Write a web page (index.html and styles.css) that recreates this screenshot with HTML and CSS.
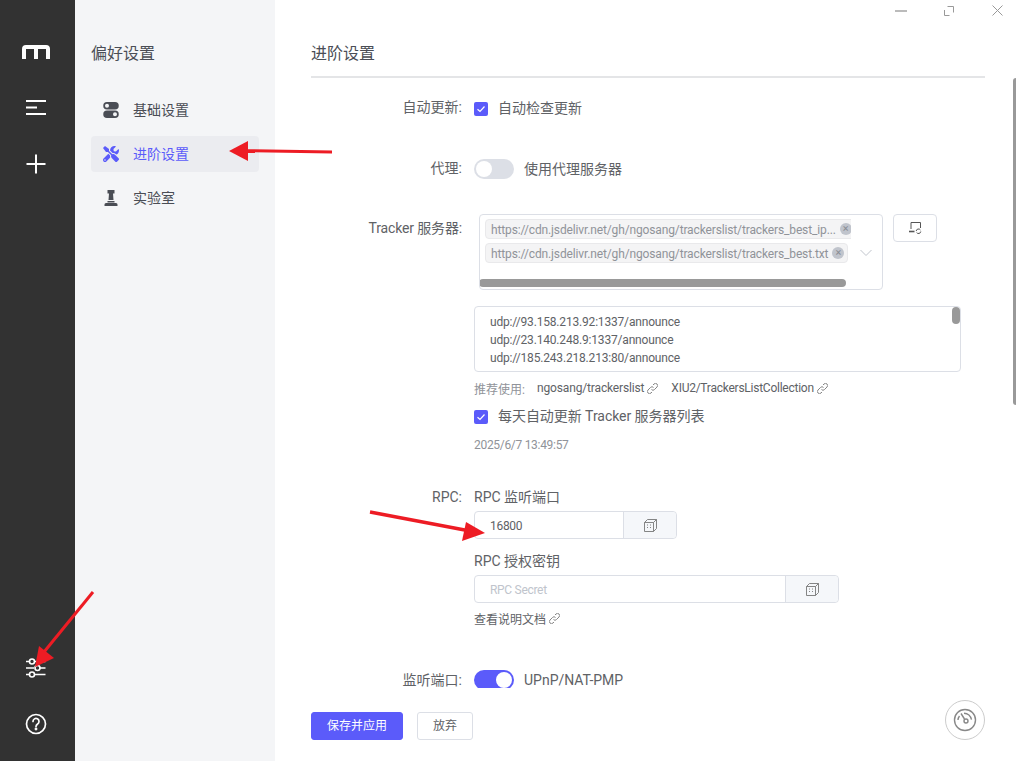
FILE: index.html
```html
<!DOCTYPE html>
<html lang="zh-CN">
<head>
<meta charset="utf-8">
<title>偏好设置</title>
<link rel="stylesheet" href="styles.css">
</head>
<body>
<div class="app">
  <aside class="rail">
    <div class="rail-top">
      <svg class="logo" width="28" height="14" viewBox="0 0 28 14"><path fill="#fff" d="M0 14V4a4 4 0 0 1 4-4h20a4 4 0 0 1 4 4v10h-4V4h-8v10h-4V4H4v10z"/></svg>
      <svg class="rail-icon" width="22" height="16" viewBox="0 0 22 16"><path stroke="#fff" stroke-width="2" fill="none" d="M1 2h20M1 8.500h11M1 15h20"/></svg>
      <svg class="rail-icon plus" width="20" height="20" viewBox="0 0 20 20"><path stroke="#fff" stroke-width="2" fill="none" d="M0.500 10h19M10 0.500v19"/></svg>
    </div>
    <div class="rail-bottom">
      <svg width="22" height="20" viewBox="0 0 22 20" fill="none" stroke="#fff" stroke-width="1.600"><path d="M1 3.500h3.500M10 3.500h10.500M1 10h8M15 10h5.500M1 16.500h3.500M10 16.500h10.500"/><circle cx="7" cy="3.500" r="2.500"/><circle cx="12.500" cy="10" r="2.500"/><circle cx="7" cy="16.500" r="2.500"/></svg>
      <svg width="22" height="22" viewBox="0 0 22 22" fill="none" stroke="#fff" stroke-width="1.700"><circle cx="11" cy="11" r="9.500"/><path d="M8 8.500a3 3 0 1 1 4.600 2.500c-1 .7-1.600 1.200-1.600 2.500" stroke-linecap="round"/><circle cx="11" cy="16" r=".6" fill="#fff"/></svg>
    </div>
  </aside>

  <nav class="subnav">
    <h1 class="subnav-title">偏好设置</h1>
    <ul class="subnav-list">
      <li class="subnav-item">
        <svg width="16" height="16" viewBox="0 0 16 16"><path fill="#4a4d55" fill-rule="evenodd" d="M4 0h8a3.750 3.750 0 0 1 0 7.500H4A3.750 3.750 0 0 1 4 0zm0 1.800a2 2 0 1 0 0 4 2 2 0 0 0 0-4zM4 8.500h8a3.750 3.750 0 0 1 0 7.500H4a3.750 3.750 0 0 1 0-7.500zm8 1.800a2 2 0 1 0 0 4 2 2 0 0 0 0-4z"/></svg>
        <span>基础设置</span>
      </li>
      <li class="subnav-item active">
        <svg width="16" height="16" viewBox="0 0 512 512"><path fill="#5b5bfa" d="M501.100 395.700 384 278.600c-23.100-23.100-57.600-27.600-85.400-13.900L192 158.100V96L64 0 0 64l96 128h62.100l106.600 106.600c-13.600 27.800-9.200 62.300 13.900 85.400l117.100 117.100c14.600 14.600 38.200 14.600 52.700 0l52.700-52.700c14.500-14.600 14.500-38.200 0-52.700zM331.700 225c28.300 0 54.900 11 74.900 31l19.400 19.400c15.800-6.900 30.800-16.500 43.800-29.500 37.100-37.100 49.700-89.300 37.900-136.700-2.200-9-13.500-12.100-20.100-5.500l-74.400 74.400-67.900-11.300L334 98.900l74.400-74.400c6.600-6.600 3.400-17.900-5.700-20.200-47.400-11.700-99.600.9-136.600 37.900-28.500 28.500-41.900 66.100-41.200 103.600l82.100 82.100c8.100-1.900 16.500-2.900 24.700-2.900zm-103.900 82-56.700-56.700L18.700 402.800c-25 25-25 65.500 0 90.500s65.500 25 90.500 0l123.600-123.600c-7.600-19.900-9.900-41.600-5-62.700zM64 472c-13.200 0-24-10.800-24-24 0-13.300 10.700-24 24-24s24 10.700 24 24c0 13.200-10.700 24-24 24z"/></svg>
        <span>进阶设置</span>
      </li>
      <li class="subnav-item">
        <svg width="16" height="16" viewBox="0 0 16 16"><path fill="#4a4d55" d="M4.500 0h7v3.500H10L10.500 10h-5L6 3.500H4.500zM4.500 11h7v1.500h-7zM3 13h10a1.500 1.500 0 0 1 1.500 1.500V16h-13v-1.500A1.500 1.500 0 0 1 3 13z"/></svg>
        <span>实验室</span>
      </li>
    </ul>
  </nav>

  <main class="panel">
    <h2 class="panel-title">进阶设置</h2>
    <div class="form">
      <div class="row row-update">
        <div class="label label-cjk">自动更新:</div>
        <div class="field">
          <div class="check"><span class="box"><svg width="14" height="14" viewBox="0 0 14 14"><path d="M3.500 7.200 6 9.500l4.500-5" fill="none" stroke="#fff" stroke-width="1.200"/></svg></span><span class="check-text">自动检查更新</span></div>
        </div>
      </div>

      <div class="row row-proxy">
        <div class="label label-cjk">代理:</div>
        <div class="field">
          <div class="switch-line"><span class="switch"><span class="knob"></span></span><span class="check-text">使用代理服务器</span></div>
        </div>
      </div>

      <div class="row row-tracker">
        <div class="label label-tracker">Tracker 服务器:</div>
        <div class="field">
          <div class="tracker-top">
            <div class="select">
              <div class="tags">
                <div class="tag tag-long"><span class="tag-text">https://cdn.jsdelivr.net/gh/ngosang/trackerslist/trackers_best_ip...</span><span class="tag-close">×</span></div>
                <div class="tag"><span class="tag-text">https://cdn.jsdelivr.net/gh/ngosang/trackerslist/trackers_best.txt</span><span class="tag-close">×</span></div>
                <div class="hscroll"></div>
              </div>
              <svg class="chevron" width="12" height="8" viewBox="0 0 12 8"><path d="M.5 1 6 6.500 11.500 1" fill="none" stroke="#c0c4cc"/></svg>
            </div>
            <div class="sync-btn">
              <svg width="13" height="12" viewBox="0 0 13 12" fill="none" stroke="#555"><path d="M2 7V.5h9.500V6"/><path stroke-width="1.600" d="M0 9.500h5.500"/><path d="M7.200 9a2.300 2.300 0 0 1 4.200-1M11.800 9.500a2.300 2.300 0 0 1-4.200 1"/></svg>
            </div>
          </div>
          <div class="textarea">
            <div>udp://93.158.213.92:1337/announce</div>
            <div>udp://23.140.248.9:1337/announce</div>
            <div>udp://185.243.218.213:80/announce</div>
            <span class="vthumb"></span>
          </div>
          <div class="hint">
            <span class="hint-title">推荐使用:</span>
            <span class="hint-link">ngosang/trackerslist <svg class="link-icon" width="11" height="11" viewBox="0 0 11 11"><path d="M4.500 6.500a2 2 0 0 0 3 0L10 4a2 2 0 0 0-3-3L6 2M6.500 4.500a2 2 0 0 0-3 0L1 7a2 2 0 0 0 3 3l1-1" fill="none" stroke="#777" stroke-width=".9"/></svg></span>
            <span class="hint-link hint-link-long">XIU2/TrackersListCollection <svg class="link-icon" width="11" height="11" viewBox="0 0 11 11"><path d="M4.500 6.500a2 2 0 0 0 3 0L10 4a2 2 0 0 0-3-3L6 2M6.500 4.500a2 2 0 0 0-3 0L1 7a2 2 0 0 0 3 3l1-1" fill="none" stroke="#777" stroke-width=".9"/></svg></span>
          </div>
          <div class="check check-daily"><span class="box"><svg width="14" height="14" viewBox="0 0 14 14"><path d="M3.500 7.200 6 9.500l4.500-5" fill="none" stroke="#fff" stroke-width="1.200"/></svg></span><span class="check-text">每天自动更新 Tracker 服务器列表</span></div>
          <div class="date">2025/6/7 13:49:57</div>
        </div>
      </div>

      <div class="row row-rpc">
        <div class="label">RPC:</div>
        <div class="field">
          <div class="sub-label">RPC 监听端口</div>
          <div class="input-group group-port">
            <div class="input">16800</div>
            <div class="addon"><svg width="13" height="13" viewBox="0 0 13 13" fill="none" stroke="#777" stroke-width=".9"><path d="M.5 3.500h9v9h-9zM.5 3.500l3-3h9v9l-3 3M9.500 3.500l3-3"/><path d="M3 6h1M6 6h1M3 8.500h1M6 8.500h1"/></svg></div>
          </div>
          <div class="sub-label sub-second">RPC 授权密钥</div>
          <div class="input-group group-secret">
            <div class="input placeholder">RPC Secret</div>
            <div class="addon"><svg width="13" height="13" viewBox="0 0 13 13" fill="none" stroke="#777" stroke-width=".9"><path d="M.5 3.500h9v9h-9zM.5 3.500l3-3h9v9l-3 3M9.500 3.500l3-3"/><path d="M3 6h1M6 6h1M3 8.500h1M6 8.500h1"/></svg></div>
          </div>
          <div class="doc-link">查看说明文档 <svg class="link-icon" width="11" height="11" viewBox="0 0 11 11"><path d="M4.500 6.500a2 2 0 0 0 3 0L10 4a2 2 0 0 0-3-3L6 2M6.500 4.500a2 2 0 0 0-3 0L1 7a2 2 0 0 0 3 3l1-1" fill="none" stroke="#777" stroke-width=".9"/></svg></div>
        </div>
      </div>

      <div class="row row-port">
        <div class="label">监听端口:</div>
        <div class="field">
          <div class="switch-line"><span class="switch on"><span class="knob"></span></span><span>UPnP/NAT-PMP</span></div>
        </div>
      </div>
    </div>

    <div class="actions">
      <div class="btn primary">保存并应用</div>
      <div class="btn">放弃</div>
    </div>
  </main>
</div>

<div class="page-scroll"></div>

<div class="win-controls">
  <svg class="win-min" width="12" height="2" viewBox="0 0 12 2"><path d="M0 1h12" stroke="#bbb" stroke-width="2"/></svg>
  <svg width="10" height="10" viewBox="0 0 10 10" fill="none" stroke="#999"><path d="M3.500.5h6v6M.5 4v5.500h5"/></svg>
  <svg width="11" height="11" viewBox="0 0 11 11" fill="none" stroke="#999"><path d="M.5.500l10 10M10.500.5l-10 10"/></svg>
</div>

<div class="speedo">
  <svg width="24" height="24" viewBox="0 0 24 24" fill="none" stroke="#888" stroke-width="1.400"><circle cx="12" cy="12" r="10.500"/><circle cx="13" cy="13" r="2"/><path d="M11.500 11 8 5.500M5 12a7 7 0 0 1 1.500-4M11 5.200a8 8 0 0 1 7.500 6.500"/></svg>
</div>

<svg class="arrows" width="1016" height="761" viewBox="0 0 1016 761">
  <g fill="#ed1c24" stroke="#ed1c24">
    <path stroke-width="3" d="M332 152 245 150.700"/>
    <path stroke="none" d="M229 151 248 141V161z"/>
    <path stroke-width="3.500" d="M370 512 470 531"/>
    <path stroke="none" d="M485 533 466 522 462 541z"/>
    <path stroke-width="3" d="M93 592 44 652"/>
    <path stroke="none" d="M35 667 39 646 54 658z"/>
  </g>
</svg>
</body>
</html>
```
FILE: styles.css
```css
* { box-sizing: border-box; }
html, body { margin: 0; padding: 0; height: 100%; overflow: hidden; background: #fff; }
body { font-family: Roboto, "Noto Sans CJK SC", sans-serif; font-size: 14px; color: #606266; }
h1, h2, ul { margin: 0; padding: 0; font-weight: 400; }
ul { list-style: none; }
svg { display: block; flex: none; }

.app { display: flex; height: 761px; }

.rail { width: 75px; flex: none; background: #323232; display: flex; flex-direction: column; align-items: center; justify-content: space-between; padding: 45px 3px 26px 0; }
.rail-top { display: flex; flex-direction: column; align-items: center; }
.rail-icon { margin-top: 40px; }
.rail-icon.plus { margin-top: 39px; }
.rail-bottom { display: flex; flex-direction: column; align-items: center; gap: 35px; }

.subnav { width: 200px; flex: none; background: #f4f5f7; padding: 0 16px; }
.subnav-title { font-size: 16px; line-height: 22px; color: #4a4d55; margin-top: 43px; }
.subnav-list { margin-top: 27px; display: flex; flex-direction: column; gap: 8px; }
.subnav-item { height: 36px; display: flex; align-items: center; gap: 14px; padding-left: 12px; border-radius: 4px; color: #4a4d55; }
.subnav-item span { margin-top: -2px; }
.subnav-item.active { background: #ebecf0; color: #5b5bfa; }

.panel { flex: 1; min-width: 0; padding-left: 36px; display: flex; flex-direction: column; }
.panel-title { width: 674px; height: 78px; padding-top: 43px; font-size: 16px; line-height: 22px; color: #4a4d55; border-bottom: 2px solid #e4e5e7; }

.form { height: 610px; overflow: hidden; }
.row { display: flex; gap: 12px; }
.label { width: 151px; flex: none; text-align: right; line-height: 22px; white-space: nowrap; }
.label-cjk { line-height: 20px; }
.field { flex: 1; min-width: 0; }

.row-update { margin-top: 19px; }
.row-proxy { margin-top: 39px; }
.row-tracker { margin-top: 34px; }
.label-tracker { margin-top: 3px; letter-spacing: -.15px; }
.row-rpc { margin-top: 30px; }
.row-port { margin-top: 43px; }

.check { display: flex; align-items: center; gap: 10px; height: 22px; }
.box { width: 14px; height: 14px; margin-top: 2px; border-radius: 2px; background: #5b5bfa; }
.check-text { margin-top: -2px; }
.check-daily { margin-top: 9px; letter-spacing: -.05px; }

.switch-line { display: flex; align-items: center; gap: 10px; height: 22px; }
.switch { width: 40px; height: 20px; border-radius: 10px; background: #dcdfe6; display: flex; align-items: center; padding: 2px; }
.knob { width: 16px; height: 16px; border-radius: 50%; background: #fff; }
.switch.on { background: #5b5bfa; justify-content: flex-end; }

.tracker-top { display: flex; gap: 10px; align-items: flex-start; padding-left: 5px; }
.select { width: 404px; height: 76px; border: 1px solid #dcdfe6; border-radius: 4px; display: flex; }
.tags { width: 371px; height: 74px; overflow: hidden; padding: 4px 0 0 5px; }
.tag { height: 20px; width: max-content; display: flex; align-items: center; gap: 4px; padding: 0 3px 0 5px; background: #f4f4f5; border: 1px solid #e9e9eb; border-radius: 4px; font-size: 12px; color: #909399; white-space: nowrap; }
.tag-text { padding-top: 1px; letter-spacing: -.135px; }
.tag-long { border-radius: 4px 0 0 4px; }
.tag + .tag { margin-top: 4px; }
.tag-close { width: 12px; height: 12px; border-radius: 50%; background: #c0c4cc; color: #8a8d94; font-size: 11px; line-height: 12px; text-align: center; }
.hscroll { width: 367px; height: 8px; margin: 16px 0 0 -6px; border-radius: 4px; background: #999; }
.chevron { margin: 34px 0 0 9px; }
.sync-btn { width: 44px; height: 28px; border: 1px solid #dcdfe6; border-radius: 4px; display: flex; align-items: center; justify-content: center; }

.textarea { position: relative; width: 487px; height: 66px; margin-top: 16px; padding: 6px 15px; border: 1px solid #dcdfe6; border-radius: 4px; font-size: 12px; line-height: 18px; letter-spacing: -.18px; }
.vthumb { position: absolute; top: 0; right: 0; width: 8px; height: 17px; border-radius: 4px; background: #999; }

.hint { display: flex; align-items: center; height: 16px; margin-top: 8px; font-size: 12px; }
.hint-title { color: #909399; width: 63px; }
.hint-link { display: flex; align-items: center; gap: 3px; margin-right: 13px; letter-spacing: -.15px; }
.hint-link-long { letter-spacing: -.25px; }
.date { margin-top: 7px; font-size: 12px; line-height: 22px; color: #909399; letter-spacing: -.3px; }

.sub-label { line-height: 22px; }
.sub-second { margin-top: 11px; }
.input-group { display: flex; height: 28px; margin-top: 3px; border: 1px solid #dcdfe6; border-radius: 4px; }
.group-port { width: 203px; }
.group-secret { width: 365px; }
.input { flex: 1; padding-left: 15px; font-size: 12px; line-height: 28px; letter-spacing: -.3px; }
.placeholder { color: #c0c4cc; }
.addon { width: 53px; flex: none; border-left: 1px solid #dcdfe6; border-radius: 0 4px 4px 0; background: #f5f7fa; display: flex; align-items: center; justify-content: center; }
.doc-link { display: flex; align-items: center; gap: 3px; height: 16px; margin-top: 7px; font-size: 12px; }

.actions { display: flex; gap: 14px; padding-top: 24px; }
.btn { height: 28px; padding: 0 15px; border: 1px solid #dcdfe6; border-radius: 3px; font-size: 12px; line-height: 26px; }
.btn.primary { width: 92px; padding: 0; text-align: center; background: #5b5bfa; border-color: #5b5bfa; color: #fff; }

.page-scroll { position: absolute; top: 78px; right: 0; width: 3px; height: 327px; border-radius: 3px 0 0 3px; background: #999; }
.win-controls { position: absolute; top: 5px; right: 13px; display: flex; align-items: center; gap: 38px; }
.win-min { margin-right: -1px; }
.speedo { position: absolute; left: 945px; top: 700px; width: 40px; height: 40px; border: 1px solid #ccc; border-radius: 50%; display: flex; align-items: center; justify-content: center; background: #fff; }
.arrows { position: absolute; left: 0; top: 0; pointer-events: none; }
```
